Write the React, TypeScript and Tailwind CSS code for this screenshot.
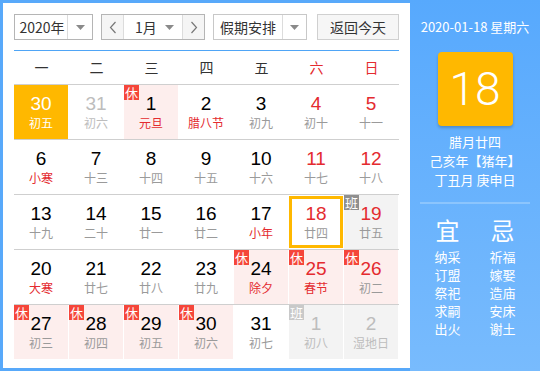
import React from "react";

type Cell = {
  n: string;
  l: string;
  numColor?: string;
  lunarColor?: string;
  bg?: string;
  badge?: "休" | "班" | "班2";
  selected?: boolean;
  today?: boolean;
};

const RED = "text-[#e42b2f]";
const GRAY = "text-[#9a9a9a]";
const LIGHT = "text-[#bdbdbd]";
const BLACK = "text-[#000]";

const rows: Cell[][] = [
  [
    { n: "30", l: "初五", selected: true },
    { n: "31", l: "初六", numColor: LIGHT, lunarColor: LIGHT },
    { n: "1", l: "元旦", lunarColor: RED, bg: "bg-[#fdeeed]", badge: "休" },
    { n: "2", l: "腊八节", lunarColor: RED },
    { n: "3", l: "初九" },
    { n: "4", l: "初十", numColor: RED },
    { n: "5", l: "十一", numColor: RED },
  ],
  [
    { n: "6", l: "小寒", lunarColor: RED },
    { n: "7", l: "十三" },
    { n: "8", l: "十四" },
    { n: "9", l: "十五" },
    { n: "10", l: "十六" },
    { n: "11", l: "十七", numColor: RED },
    { n: "12", l: "十八", numColor: RED },
  ],
  [
    { n: "13", l: "十九" },
    { n: "14", l: "二十" },
    { n: "15", l: "廿一" },
    { n: "16", l: "廿二" },
    { n: "17", l: "小年", lunarColor: RED },
    { n: "18", l: "廿四", numColor: RED, today: true },
    { n: "19", l: "廿五", numColor: RED, bg: "bg-[#f3f3f3]", badge: "班" },
  ],
  [
    { n: "20", l: "大寒", lunarColor: RED },
    { n: "21", l: "廿七" },
    { n: "22", l: "廿八" },
    { n: "23", l: "廿九" },
    { n: "24", l: "除夕", lunarColor: RED, bg: "bg-[#fdeeed]", badge: "休" },
    { n: "25", l: "春节", numColor: RED, lunarColor: RED, bg: "bg-[#fdeeed]", badge: "休" },
    { n: "26", l: "初二", numColor: RED, bg: "bg-[#fdeeed]", badge: "休" },
  ],
  [
    { n: "27", l: "初三", bg: "bg-[#fdeeed]", badge: "休" },
    { n: "28", l: "初四", bg: "bg-[#fdeeed]", badge: "休" },
    { n: "29", l: "初五", bg: "bg-[#fdeeed]", badge: "休" },
    { n: "30", l: "初六", bg: "bg-[#fdeeed]", badge: "休" },
    { n: "31", l: "初七" },
    { n: "1", l: "初八", numColor: LIGHT, lunarColor: LIGHT, bg: "bg-[#f3f3f3]", badge: "班2" },
    { n: "2", l: "湿地日", numColor: LIGHT, lunarColor: LIGHT, bg: "bg-[#f3f3f3]" },
  ],
];

const weekdays = ["一", "二", "三", "四", "五", "六", "日"];

function Caret() {
  return (
    <svg width="9" height="5" viewBox="0 0 9 5">
      <polygon points="0,0 9,0 4.5,5" fill="#8a8a8a" />
    </svg>
  );
}

function Chevron({ dir }: { dir: "l" | "r" }) {
  return (
    <svg width="8" height="13" viewBox="0 0 8 13">
      <polyline
        points={dir === "l" ? "6.5,1 1.5,6.5 6.5,12" : "1.5,1 6.5,6.5 1.5,12"}
        fill="none"
        stroke="#777"
        strokeWidth="1.2"
      />
    </svg>
  );
}

function DayCell({ c }: { c: Cell }) {
  const bg = c.selected ? "bg-[#ffb800]" : c.bg ?? "bg-white";
  const numColor = c.selected ? "text-white" : c.numColor ?? BLACK;
  const lunarColor = c.selected ? "text-white" : c.lunarColor ?? GRAY;
  return (
    <div className="w-[55px] h-[54px] pr-[1px]">
      <div className={`relative w-[54px] h-[54px] ${bg} flex flex-col items-center pt-[9px]`}>
        {c.today && (
          <div className="absolute left-0 top-[1px] w-[54px] h-[52px] border-[3px] border-[#ffb800]" />
        )}
        {c.badge === "休" && (
          <div className="absolute left-0 top-0 w-[15px] h-[15px] bg-[#f5463a] text-white text-[13px] leading-[15px] text-center font-['Noto_Sans_CJK_SC',sans-serif]">
            休
          </div>
        )}
        {c.badge === "班" && (
          <div className="absolute left-0 top-0 w-[15px] h-[15px] bg-[#8f8f8f] text-white text-[13px] leading-[15px] text-center font-['Noto_Sans_CJK_SC',sans-serif]">
            班
          </div>
        )}
        {c.badge === "班2" && (
          <div className="absolute left-0 top-0 w-[15px] h-[15px] bg-[#c9c9c9] text-white text-[13px] leading-[15px] text-center font-['Noto_Sans_CJK_SC',sans-serif]">
            班
          </div>
        )}
        <div className={`relative text-[19px] leading-[20px] font-['Liberation_Sans',sans-serif] ${numColor}`}>
          {c.n}
        </div>
        <div className={`relative text-[12px] leading-[18px] font-['Noto_Sans_CJK_SC',sans-serif] ${lunarColor}`}>
          {c.l}
        </div>
      </div>
    </div>
  );
}

export default function App() {
  return (
    <div className="w-[544px] h-[375px] bg-white">
      <div className="w-[540px] h-[371px] bg-[#58a9fa] flex">
        <div className="ml-[3px] mt-[3px] mb-[3px] w-[407px] bg-white pl-[11px] pt-[11px] font-['Liberation_Sans','Noto_Sans_CJK_SC',sans-serif]">
          {/* header */}
          <div className="flex h-[26px] text-[14px] text-[#333]">
            <div className="w-[79px] h-[26px] border border-[#b5b5b5] flex">
              <div className="flex-1 flex items-center justify-center pl-[2px] border-r border-[#dcdcdc] font-['Noto_Sans_CJK_SC',sans-serif]">
                2020年
              </div>
              <div className="w-[24px] flex items-center justify-center">
                <Caret />
              </div>
            </div>
            <div className="ml-[8px] w-[104px] h-[26px] border border-[#b5b5b5] flex">
              <div className="w-[22px] bg-[#f5f5f5] border-r border-[#dcdcdc] flex items-center justify-center">
                <Chevron dir="l" />
              </div>
              <div className="flex-1 flex items-center pl-[11px] pr-[8px] justify-between font-['Noto_Sans_CJK_SC',sans-serif]">
                <span>1月</span>
                <Caret />
              </div>
              <div className="w-[22px] bg-[#f5f5f5] border-l border-[#dcdcdc] flex items-center justify-center">
                <Chevron dir="r" />
              </div>
            </div>
            <div className="ml-[8px] w-[94px] h-[26px] border border-[#c8c8c8] flex">
              <div className="flex-1 flex items-center justify-center border-r border-[#dcdcdc] font-['Noto_Sans_CJK_SC',sans-serif]">
                假期安排
              </div>
              <div className="w-[23px] flex items-center justify-center">
                <Caret />
              </div>
            </div>
            <div className="ml-[10px] w-[82px] h-[26px] border border-[#d0d0d0] bg-[#f6f6f6] flex items-center justify-center font-['Noto_Sans_CJK_SC',sans-serif]">
              返回今天
            </div>
          </div>
          {/* blue line */}
          <div className="mt-[10px] w-[385px] h-[1px] bg-[#4fa5f6]" />
          {/* weekday header */}
          <div className="grid grid-cols-7 w-[385px] h-[33px] items-center text-[14px] font-['Noto_Sans_CJK_SC',sans-serif]">
            {weekdays.map((w, i) => (
              <div key={w} className={`text-center ${i >= 5 ? "text-[#e42b2f]" : "text-[#333]"}`}>
                {w}
              </div>
            ))}
          </div>
          {rows.map((r, ri) => (
            <div key={ri}>
              <div className="w-[385px] h-[1px] bg-[#cfcfcf]" />
              <div className="flex">
                {r.map((c, ci) => (
                  <DayCell key={ci} c={c} />
                ))}
              </div>
            </div>
          ))}
        </div>
        {/* right panel */}
        <div className="w-[130px] bg-linear-to-b from-[#57a9fd] to-[#78bbfd] flex flex-col items-center pt-[17px] text-white font-['Noto_Sans_CJK_SC',sans-serif]">
          <div className="text-[13px] leading-[20px]">2020-01-18 星期六</div>
          <div className="mt-[15px] w-[75px] h-[74px] rounded-[4px] bg-[#ffb800] shadow-[0_2px_3px_rgba(0,0,0,0.2)] flex items-center justify-center text-[46px] font-light font-['Roboto',sans-serif]">
            18
          </div>
          <div className="mt-[6px] text-[13px] leading-[19px] text-center">
            <div>腊月廿四</div>
            <div>己亥年【猪年】</div>
            <div>丁丑月 庚申日</div>
          </div>
          <div className="mt-[13px] w-[110px] h-[2px] bg-[#8cc5fd]" />
          <div className="mt-[11px] flex">
            <div className="w-[55px] flex flex-col items-center">
              <div className="text-[24px] leading-[30px]">宜</div>
              <div className="mt-[3px] text-[13px] leading-[18px] text-center">
                <div>纳采</div>
                <div>订盟</div>
                <div>祭祀</div>
                <div>求嗣</div>
                <div>出火</div>
              </div>
            </div>
            <div className="w-[55px] flex flex-col items-center">
              <div className="text-[24px] leading-[30px]">忌</div>
              <div className="mt-[3px] text-[13px] leading-[18px] text-center">
                <div>祈福</div>
                <div>嫁娶</div>
                <div>造庙</div>
                <div>安床</div>
                <div>谢土</div>
              </div>
            </div>
          </div>
        </div>
      </div>
    </div>
  );
}
